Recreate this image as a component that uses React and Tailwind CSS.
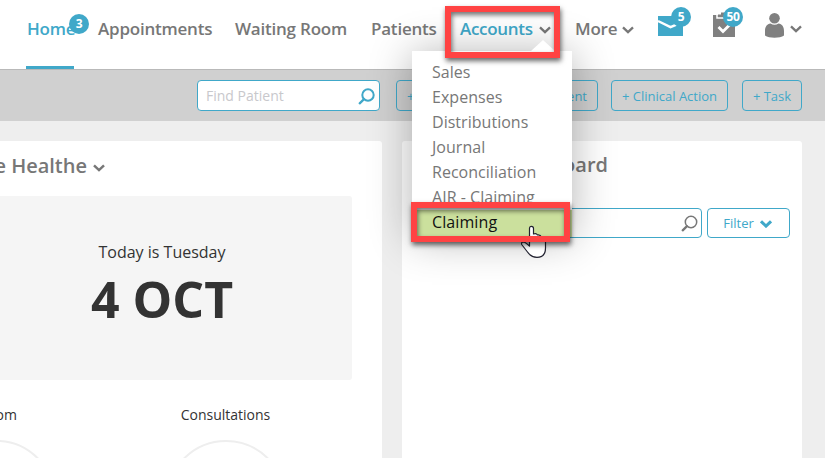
import React from 'react';

const Chevron = ({ className = '', weight = 2.3 }) => (
  <svg className={className} width="12" height="8" viewBox="0 0 12 8" fill="none" stroke="currentColor" strokeWidth={weight}>
    <path d="M1 1.3L6 6.1L11 1.3" />
  </svg>
);

const SearchIcon = ({ className = '', weight = 1.8 }) => (
  <svg className={className} width="17" height="17" viewBox="0 0 17 17" fill="none" stroke="currentColor">
    <circle cx="10" cy="7" r="5.7" strokeWidth={weight} />
    <path d="M6 11.2L1.7 15.3" strokeWidth="2.3" strokeLinecap="round" />
  </svg>
);

const Badge = ({ children, className }) => (
  <span className={`absolute flex h-5 w-5 items-center justify-center rounded-full bg-[#40a8c9] text-[12px] font-bold leading-none tracking-[-0.4px] text-white ${className}`}>
    {children}
  </span>
);

const ActionButton = ({ children, className }) => (
  <button className={`h-[31px] shrink-0 whitespace-nowrap rounded-[4px] border border-[#40a8c9] pt-[2px] text-[13px] text-[#40a8c9] ${className}`}>
    {children}
  </button>
);

const menuItems = ['Sales', 'Expenses', 'Distributions', 'Journal', 'Reconciliation', 'AIR - Claiming'];

function AccountsMenu() {
  return (
    <div className="absolute left-[412px] top-[51px] z-10 w-[160px] bg-white pt-[9px] text-[16px] leading-[25px] text-[#777] shadow-[0_2px_40px_rgba(0,0,0,0.3)]">
      <svg className="absolute left-[119px] top-[-11px]" width="24" height="11" viewBox="0 0 24 11">
        <path d="M0 11L12 0L24 11Z" fill="#fff" />
      </svg>
      {menuItems.map((item) => (
        <div key={item} className="h-[25px] pl-5 tracking-[0.03px]">{item}</div>
      ))}
      <div className="h-[27px] bg-[#cbe09d] pl-5 tracking-[0.1px] text-[#111]">Claiming</div>
    </div>
  );
}

function Header() {
  return (
    <header className="flex h-[70px] border-b border-[#b9b9b9] bg-white pl-[26px] text-[17px] font-semibold tracking-[-0.22px] text-[#777]">
      <a className="relative h-[69px] w-12 border-b-[3px] border-[#40a8c9] pl-px pt-[17px] leading-6 text-[#40a8c9]">
        Home
        <Badge className="left-[43px] top-[14px]">3</Badge>
      </a>
      <a className="ml-6 w-[137px] pt-[17px] leading-6">Appointments</a>
      <a className="w-[136px] whitespace-nowrap pt-[17px] leading-6">Waiting Room</a>
      <a className="w-[89px] pt-[17px] leading-6">Patients</a>
      <a className="flex w-[115px] pt-[17px] leading-6 text-[#40a8c9]">
        <span className="w-[79px] tracking-[-0.3px]">Accounts</span>
        <Chevron className="mt-[9px] text-[#777]" />
      </a>
      <a className="flex w-[83px] pt-[17px] leading-6">
        <span className="w-[47px]">More</span>
        <Chevron className="mt-[9px]" />
      </a>
      <div className="relative w-[55px] pt-4">
        <svg width="25" height="20" viewBox="0 0 25 20">
          <path d="M0 0H25V20H0Z" fill="#40a8c9" />
          <path d="M0 5L12.5 11.2L18.5 8.7" fill="none" stroke="#fff" strokeWidth="2.4" />
        </svg>
        <Badge className="left-[13px] top-[7px]">5</Badge>
      </div>
      <div className="relative w-[52px] pt-3">
        <svg width="22" height="25" viewBox="0 0 22 25">
          <path d="M0 3H22V25H0Z" fill="#808080" />
          <path d="M4 2V6H18V3" fill="none" stroke="#fff" strokeWidth="1.5" />
          <path d="M5 2.5H8V0.5H14V2.5H17V4.5H5Z" fill="#808080" />
          <path d="M5.5 15L10 19.5L17 12.5" fill="none" stroke="#fff" strokeWidth="2.8" />
        </svg>
        <Badge className="left-[10px] top-[7px]">50</Badge>
      </div>
      <div className="flex pt-[13px]">
        <svg width="19" height="25" viewBox="0 0 19 25" fill="#808080">
          <circle cx="9.5" cy="5.3" r="5.3" />
          <path d="M0 22.5V18C0 13.5 2 11 5.5 10.4C8 12.2 11 12.2 13.5 10.4C17 11 19 13.5 19 18V22.5C15 25.5 4 25.5 0 22.5Z" />
        </svg>
        <Chevron className="ml-[6px] mt-3" />
      </div>
    </header>
  );
}

export default function App() {
  return (
    <div className="relative h-[458px] w-[825px] overflow-hidden bg-[#eee] font-['Open_Sans','Noto_Sans',sans-serif]">
      <Header />
      <div className="flex h-[51px] bg-[#d0d0d0] pl-[197px] pt-[10px]">
        <div className="flex h-[31px] w-[183px] items-center justify-between rounded-[4px] border border-[#40a8c9] bg-white pl-2 pr-1 text-[14px] text-[#c8c8cc]">
          <span>Find Patient</span>
          <SearchIcon className="mt-px text-[#40a8c9]" weight={2} />
        </div>
        <ActionButton className="ml-4 w-[98px] pl-[10px] text-left">+</ActionButton>
        <ActionButton className="ml-[10px] w-[94px] pr-[10px] text-right">ent</ActionButton>
        <ActionButton className="ml-[13px] w-[117px]">+ Clinical Action</ActionButton>
        <ActionButton className="ml-[14px] w-[60px]">+ Task</ActionButton>
      </div>

      <main className="flex gap-5 pt-5">
        <section className="h-[330px] w-[382px] shrink-0 overflow-hidden rounded-tr-[3px] bg-white">
          <h2 className="flex h-[55px] pt-[10px] text-[20px] font-semibold leading-[30px] text-[#777]">
            <span className="flex w-[93px] justify-end whitespace-nowrap pr-[6px]">e Healthe</span>
            <Chevron className="mt-[13px]" weight={2.5} />
          </h2>
          <div className="h-[184px] w-[352px] rounded-r-[3px] bg-[#f5f5f5] pr-7 pt-[44px] text-center text-[#333]">
            <div className="text-[16px] leading-6">Today is Tuesday</div>
            <div className="pt-[5px] text-[50px] font-bold leading-[60px]">4 OCT</div>
          </div>
          <div className="flex pt-[25px] text-[14px] leading-5 text-[#333]">
            <div className="flex w-[125px] flex-col">
              <span className="flex w-[17px] justify-end whitespace-nowrap">oom</span>
              <div className="-ml-[64px] mt-[15px] h-[120px] w-[120px] rounded-full border-2 border-[#eee]" />
            </div>
            <div className="flex w-[201px] flex-col items-center">
              <span>Consultations</span>
              <div className="mt-[15px] h-[120px] w-[120px] rounded-full border-2 border-[#eee]" />
            </div>
          </div>
        </section>

        <section className="h-[330px] w-[400px] shrink-0 rounded-[3px] bg-white">
          <h2 className="flex h-[67px] w-[206px] justify-end whitespace-nowrap pt-[9px] text-[20px] font-semibold leading-[30px] text-[#777]">board</h2>
          <div className="flex gap-[5px] pl-[15px]">
            <div className="flex h-[30px] w-[285px] items-center justify-end rounded-[4px] border border-[#40a8c9] pr-[3px]">
              <SearchIcon className="text-[#777]" weight={1.5} />
            </div>
            <button className="flex h-[30px] w-[83px] items-center justify-center gap-[6px] rounded-[4px] border border-[#40a8c9] pr-[2px] text-[13px] text-[#40a8c9]">
              <span className="pt-px">Filter</span>
              <Chevron className="mt-px" weight={3} />
            </button>
          </div>
        </section>
      </main>

      <AccountsMenu />

      <div className="absolute left-[445px] top-[6px] z-20 h-[52px] w-[115px] border-[6px] border-[#ff4343] shadow-[1px_3px_5px_rgba(0,0,0,0.6),inset_1px_3px_5px_rgba(0,0,0,0.55)]" />
      <svg className="absolute left-[520px] top-[225px] z-20" width="28" height="34" viewBox="0 0 28 34" fill="#fff" stroke="#222230" strokeWidth="1.2" strokeLinejoin="round">
        <path d="M9.5 19V3.5Q9.5 1.3 11.5 1.3Q13.5 1.3 13.5 3.5V9Q16.5 8 17.5 10Q20.5 9.6 21.5 12.3Q25.3 12 25.5 15.5V23Q25.5 32.3 17 32.3Q11 32.3 7.5 27L1.7 19.5Q1 17 3.5 16.8Q5 17 9.5 21Z" />
      </svg>
      <div className="absolute left-[411px] top-[202px] z-20 h-[40px] w-[159px] border-[6px] border-[#ff4343] shadow-[1px_3px_5px_rgba(0,0,0,0.6),inset_1px_3px_5px_rgba(0,0,0,0.55)]" />
    </div>
  );
}
